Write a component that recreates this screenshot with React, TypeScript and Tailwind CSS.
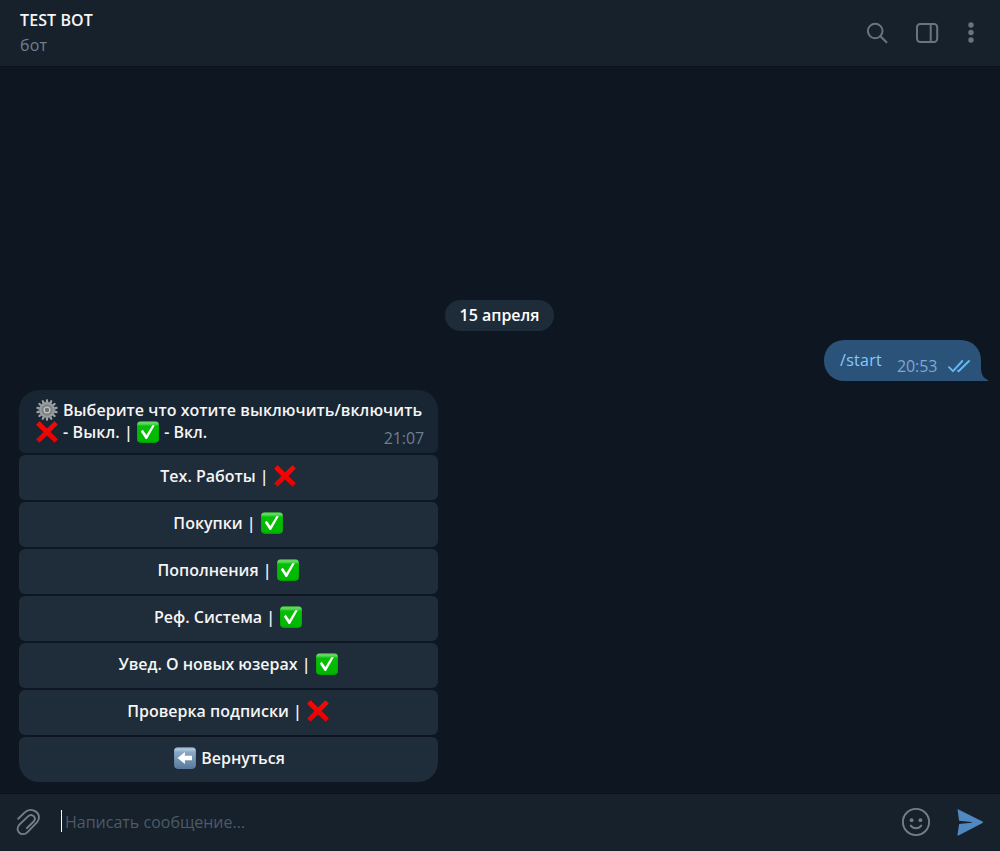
import React from "react";

function Cross() {
  return (
    <svg className="h-[22px] w-[22px] shrink-0" viewBox="0 0 22 22">
      <defs>
        <linearGradient id="cross" x1="0" y1="0" x2="0" y2="1">
          <stop offset="0" stopColor="#f80a05" />
          <stop offset="1" stopColor="#e60000" />
        </linearGradient>
      </defs>
      <path
        fill="url(#cross)"
        d="M3.6.3 11 7.4 18.5.3 21.8 3.6 14.5 11l7.4 7.3-3.2 3.4L11 14.6l-7.4 7.1L.1 18.4 7.5 11 .1 3.7Z"
      />
    </svg>
  );
}

function Check() {
  return (
    <svg className="h-[22px] w-[22px] shrink-0" viewBox="0 0 22 22">
      <defs>
        <linearGradient id="check" x1="0" y1="0" x2="0" y2="1">
          <stop offset="0" stopColor="#35b835" />
          <stop offset=".07" stopColor="#6fdc6f" />
          <stop offset=".16" stopColor="#3bcf3b" />
          <stop offset=".22" stopColor="#04c004" />
          <stop offset=".9" stopColor="#00b800" />
          <stop offset="1" stopColor="#089808" />
        </linearGradient>
      </defs>
      <rect x=".1" y=".3" width="21.8" height="21.6" rx="3.8" fill="url(#check)" />
      <path fill="#fff" d="M15.3 4.2h2.5L10 18H8.7L3.8 10.4l2-1.6 3.6 5.3Z" />
    </svg>
  );
}

function BackArrow() {
  return (
    <svg className="h-[22px] w-[22px] shrink-0" viewBox="0 0 22 22">
      <defs>
        <linearGradient id="back" x1="0" y1="0" x2="0" y2="1">
          <stop offset="0" stopColor="#7f9fb9" />
          <stop offset=".08" stopColor="#b3cbde" />
          <stop offset=".22" stopColor="#8aa9c8" />
          <stop offset="1" stopColor="#58799b" />
        </linearGradient>
      </defs>
      <rect x=".1" y=".3" width="21.8" height="21.6" rx="3.8" fill="url(#back)" />
      <path fill="#fff" d="m3.6 11 7.3-6v3.7H18v4.6h-7.1V17Z" />
    </svg>
  );
}

const teeth = Array.from({ length: 14 }, (_, i) => (i * 360) / 14);

function Gear() {
  return (
    <svg className="h-[22px] w-[22px] shrink-0" viewBox="0 0 22 22">
      {teeth.map((a) => (
        <path key={a} d="M9.6 3.4 10.2.2h1.6l.6 3.2Z" fill="#a0a3a6" transform={`rotate(${a} 11 11)`} />
      ))}
      <circle cx="11" cy="11" r="6.8" fill="#7d8184" stroke="#999da0" strokeWidth="2.2" />
      <circle cx="11" cy="11" r="2.9" fill="#6d7174" stroke="#bfc2c4" strokeWidth="1.4" />
    </svg>
  );
}

const rows = [
  { label: "Тех. Работы", on: false },
  { label: "Покупки", on: true },
  { label: "Пополнения", on: true },
  { label: "Реф. Система", on: true },
  { label: "Увед. О новых юзерах", on: true },
  { label: "Проверка подписки", on: false },
];

function Header() {
  return (
    <header className="flex h-[67px] items-start justify-between border-b border-[#0b131a] bg-[#17212b] pl-5 pr-[23px]">
      <div className="pt-[9px]">
        <h1 className="text-[16px] font-semibold leading-[22px] tracking-[0.1px] text-[#f5f5f5]">TEST BOT</h1>
        <p className="mt-[3px] text-[16px] leading-[22px] tracking-[0.2px] text-[#6d7f8f]">бот</p>
      </div>
      <div className="flex pt-[21px] text-[#68747f]">
        <svg className="h-6 w-6" viewBox="0 0 24 24" fill="none" stroke="currentColor" strokeWidth="2">
          <circle cx="9.2" cy="10" r="7.3" />
          <path d="m14.4 15.2 6.1 6.1" strokeLinecap="round" />
        </svg>
        <svg className="ml-[25px] h-6 w-6" viewBox="0 0 24 24" fill="none" stroke="currentColor" strokeWidth="2">
          <rect x="2" y="3" width="20.2" height="18" rx="3.2" />
          <path d="M15.7 3v18" />
        </svg>
        <svg className="ml-[26px] h-6 w-3" viewBox="0 0 12 24" fill="currentColor">
          <circle cx="6" cy="4" r="2.7" />
          <circle cx="6" cy="11.5" r="2.7" />
          <circle cx="6" cy="19" r="2.7" />
        </svg>
      </div>
    </header>
  );
}

export default function App() {
  return (
    <div className="flex h-[851px] w-[1000px] flex-col overflow-hidden bg-[#0e1621] font-['Open_Sans','Noto_Sans',sans-serif] text-[16px]">
      <Header />
      <main className="flex flex-1 flex-col pt-[233px]">
        <div className="ml-[445px] flex h-[31px] w-[109px] items-center justify-center rounded-full bg-[#1e2c3a] pb-[2px] font-semibold leading-[22px] text-white">
          15 апреля
        </div>
        <div className="mt-[9px] flex h-[41px] justify-end pr-[11px]">
          <div className="flex h-[41px] w-[157px] rounded-[20px] rounded-br-none bg-[#2b5278] pl-4 leading-[22px]">
            <span className="w-[42px] pt-[9px] tracking-[0.3px] text-[#83caff]">/start</span>
            <span className="ml-[15px] w-[41px] pt-[15px] tracking-[-0.1px] text-[#7da8d3]">20:53</span>
            <svg className="ml-[9px] mt-[18px] h-4 w-6" viewBox="0 0 24 16" fill="none" stroke="#65b9f4" strokeWidth="1.9" strokeLinecap="round" strokeLinejoin="round">
              <path d="m2 9.2 4 4L15.3 3M11 12.8l.6.4L22 3" />
            </svg>
          </div>
          <svg className="h-[41px] w-2 shrink-0" viewBox="0 0 8 41">
            <path fill="#2b5278" d="M0 28c0 6 2.5 10.5 7 12v1H0Z" />
          </svg>
        </div>
        <section className="ml-[19px] mt-[9px] flex w-[419px] flex-col gap-[2px] font-semibold leading-[22px] text-[#f5f5f5]">
          <div className="flex h-[63px] flex-col rounded-b-[6px] rounded-t-[20px] bg-[#182533] pl-[17px] pr-[14px] pt-[9px]">
            <div className="flex items-center gap-[5px] whitespace-nowrap">
              <Gear />
              <span className="tracking-[0.05px]">Выберите что хотите выключить/включить</span>
            </div>
            <div className="flex items-start">
              <Cross />
              <span className="ml-[5px] whitespace-pre tracking-[0.1px]">- Выкл. | </span>
              <Check />
              <span className="ml-[5px]">- Вкл.</span>
              <time className="ml-auto pt-[6px] font-normal tracking-[-0.1px] text-[#6d7f8f]">21:07</time>
            </div>
          </div>
          {rows.map((row) => (
            <button
              key={row.label}
              type="button"
              className="flex h-[45px] items-center justify-center gap-[5px] rounded-[6px] bg-[#1f2c39] pb-[3px] pr-px font-semibold"
            >
              <span>{row.label} |</span>
              {row.on ? <Check /> : <Cross />}
            </button>
          ))}
          <button
            type="button"
            className="flex h-[45px] items-center justify-center gap-[5px] rounded-b-[20px] rounded-t-[6px] bg-[#1f2c39] pb-[3px] pl-[2px] font-semibold"
          >
            <BackArrow />
            <span>Вернуться</span>
          </button>
        </section>
      </main>
      <footer className="flex h-[58px] items-start border-t border-[#0b131a] bg-[#17212b] pl-[15px] pr-4">
        <svg className="mt-[14px] h-7 w-7 text-[#737f88]" viewBox="0 0 28 28" fill="none" stroke="currentColor" strokeWidth="1.9" strokeLinecap="round" strokeLinejoin="round">
          <path d="M3.2 10.8 9.8 4.4C16.8-2 28.3 5.6 22.4 13.8L12.8 23.8C6.6 30-1 22.4 4.4 16.6l8.6-8.2c4.2-3.8 9.2 1.4 5.4 5.4l-6.6 6.4" />
        </svg>
        <div className="ml-[18px] mt-4 h-[22px] w-px bg-white" />
        <span className="ml-[3px] mt-[17px] flex-1 leading-[22px] text-[#4c5a67]">Написать сообщение...</span>
        <svg className="mt-[13px] h-[30px] w-[30px]" viewBox="0 0 30 30" fill="none" stroke="#737f88" strokeWidth="1.9" strokeLinecap="round">
          <circle cx="15" cy="15" r="13.1" />
          <circle cx="10.6" cy="13.2" r="1.9" fill="#737f88" stroke="none" />
          <circle cx="19.4" cy="13.2" r="1.9" fill="#737f88" stroke="none" />
          <path d="M9.8 18.6c2.5 3.5 7.9 3.5 10.4 0" />
        </svg>
        <svg className="ml-[25px] mt-[15px] h-[27px] w-7" viewBox="0 0 28 27">
          <path fill="#5288c1" d="M1.6.9C1.3.2 1.8.1 2.5.4l24 12.2c.8.4.8 1 0 1.4L2.5 26.4c-.7.3-1.2.1-1-.7L3.1 15l12.4-1.2c.5 0 .5-.7 0-.8L3.1 11.8Z" />
        </svg>
      </footer>
    </div>
  );
}
